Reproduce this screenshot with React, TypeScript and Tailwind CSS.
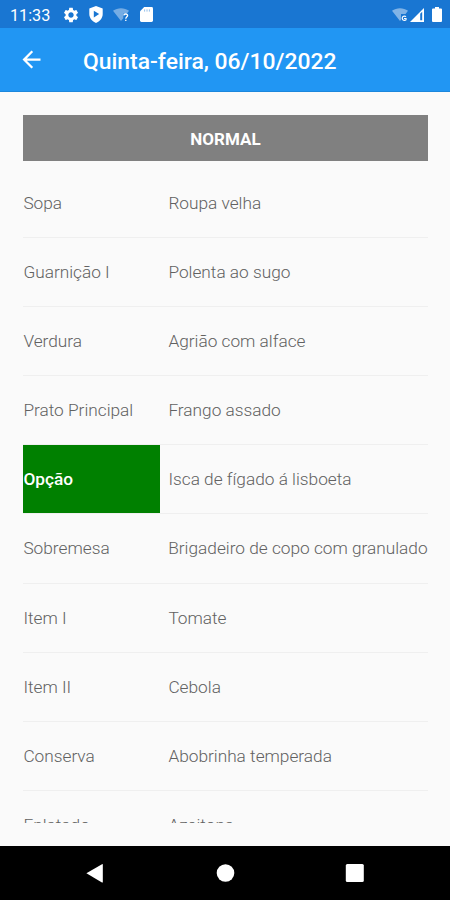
import { clsx } from "clsx";
import { MdArrowBack, MdSettings } from "react-icons/md";

const ROWS = [
  { label: "Sopa", value: "Roupa velha" },
  { label: "Guarnição I", value: "Polenta ao sugo" },
  { label: "Verdura", value: "Agrião com alface" },
  { label: "Prato Principal", value: "Frango assado" },
  { label: "Opção", value: "Isca de fígado á lisboeta", highlighted: true },
  { label: "Sobremesa", value: "Brigadeiro de copo com granulado" },
  { label: "Item I", value: "Tomate" },
  { label: "Item II", value: "Cebola" },
  { label: "Conserva", value: "Abobrinha temperada" },
  { label: "Enlatado", value: "Azeitona" },
];

function ShieldIcon() {
  return (
    <svg viewBox="0 0 14 17" className="h-[17px] w-3.5" aria-hidden="true">
      <path d="M7 0 13.7 2.4V8C13.7 12 10.8 15.4 7 17 3.2 15.4.3 12 .3 8V2.4Z" fill="#fff" />
      <path d="M4.8 4.8 10.2 8.1 4.8 11.4Z" fill="#1976d2" />
    </svg>
  );
}

function WifiUnknownIcon() {
  return (
    <svg viewBox="0 0 17 14" className="h-3.5 w-[17px]" aria-hidden="true">
      <path d="M0 2.8C4.6-.7 11.4-.7 16 2.8L14 5.4H10.3V10.3L8 13Z" fill="#fff" opacity=".4" />
      <path
        d="M10.8 7.4C11 5.5 14.8 5.5 14.6 7.6 14.5 8.8 12.8 9 12.8 10.7M12.8 11.7V13"
        fill="none"
        stroke="#fff"
        strokeWidth="1.3"
      />
    </svg>
  );
}

function SdCardIcon() {
  return (
    <svg viewBox="0 0 13 15" className="h-[15px] w-[13px]" aria-hidden="true">
      <path d="M4.2 0H11.6Q13 0 13 1.4V13.6Q13 15 11.6 15H1.4Q0 15 0 13.6V4.3Z" fill="#fff" />
      <path d="M4.6 2.4V4.6M7 2.4V4.6M9.4 2.4V4.6" stroke="#1976d2" strokeWidth="1" opacity=".45" />
    </svg>
  );
}

function WifiIcon() {
  return (
    <svg viewBox="0 0 17 14" className="h-3.5 w-[17px]" aria-hidden="true">
      <path d="M0 2.8C4.6-.7 11.4-.7 16 2.8L13.5 6H9V11.8L8 13Z" fill="#fff" opacity=".45" />
      <path d="M14 8.7A2.2 2.2 0 1 0 14 11.8V10.5H12" fill="none" stroke="#fff" strokeWidth="1.2" />
    </svg>
  );
}

function SignalIcon() {
  return (
    <svg viewBox="0 0 14 14" className="size-3.5" aria-hidden="true">
      <path d="M0 14 14 0V14Z" fill="#fff" />
      <path d="M10.2 5.8 12.2 3.8V12.2H10.2Z" fill="#1976d2" />
    </svg>
  );
}

function BatteryIcon() {
  return (
    <svg viewBox="0 0 10 15" className="h-[15px] w-[10px]" aria-hidden="true">
      <path
        d="M3 0H7V1.6H9Q10 1.6 10 2.6V14Q10 15 9 15H1Q0 15 0 14V2.6Q0 1.6 1 1.6H3Z"
        fill="#fff"
      />
    </svg>
  );
}

function StatusBar() {
  return (
    <div className="flex h-7 shrink-0 items-center bg-[#1976d2] pl-[10px] pr-2 pt-px text-white">
      <span className="w-[51.5px] pt-0.5 text-[16.2px] leading-6">11:33</span>
      <MdSettings className="size-[18px]" />
      <div className="ml-[9px]">
        <ShieldIcon />
      </div>
      <div className="ml-[10.5px]">
        <WifiUnknownIcon />
      </div>
      <div className="ml-[10px]">
        <SdCardIcon />
      </div>
      <div className="ml-auto flex items-center">
        <WifiIcon />
        <div className="ml-px">
          <SignalIcon />
        </div>
        <div className="ml-2">
          <BatteryIcon />
        </div>
      </div>
    </div>
  );
}

function AppBar() {
  return (
    <header className="flex h-16 shrink-0 items-center border-b border-[#1c87dc] bg-[#2196f3] pl-[18px] text-white">
      <MdArrowBack className="size-[27px]" />
      <h1 className="ml-[38px] pt-[5px] text-[22.9px] font-medium leading-none">
        Quinta-feira, 06/10/2022
      </h1>
    </header>
  );
}

function MenuTable() {
  return (
    <div className="flex flex-col">
      {ROWS.map((row) => (
        <div
          key={row.label}
          className="flex h-[69.2px] shrink-0 items-stretch border-b border-[#efefef] text-[17.25px] font-light text-[#616161]"
        >
          <div
            className={clsx(
              "flex w-[137px] items-center whitespace-nowrap pt-0.5",
              row.highlighted && "bg-[#008000] font-medium text-white",
            )}
          >
            <span>{row.label}</span>
          </div>
          <div className="flex items-center whitespace-nowrap pl-2 pt-0.5">
            <span>{row.value}</span>
          </div>
        </div>
      ))}
    </div>
  );
}

function NavigationBar() {
  return (
    <nav className="flex h-[54px] shrink-0 items-center bg-black">
      <svg viewBox="0 0 450 54" className="h-[54px] w-full" fill="#fff" aria-hidden="true">
        <path d="M86.4 27.3 102 18.2Q102.8 17.8 102.8 18.6V36Q102.8 36.8 102 36.4Z" />
        <circle cx="225.5" cy="27" r="8.8" />
        <rect x="345.8" y="18" width="18" height="18" rx="1.5" />
      </svg>
    </nav>
  );
}

export default function App() {
  return (
    <div className="flex h-[900px] w-[450px] flex-col overflow-hidden bg-[#fafafa] font-[Roboto,sans-serif]">
      <StatusBar />
      <AppBar />
      <main className="mb-[23px] ml-[23.4px] mr-[22.4px] mt-[23px] min-h-0 flex-1 overflow-hidden">
        <div className="mb-[7.9px] flex h-[45.5px] items-center justify-center bg-[#808080] pt-[3px] text-[17px] font-bold text-white">
          NORMAL
        </div>
        <MenuTable />
      </main>
      <NavigationBar />
    </div>
  );
}
